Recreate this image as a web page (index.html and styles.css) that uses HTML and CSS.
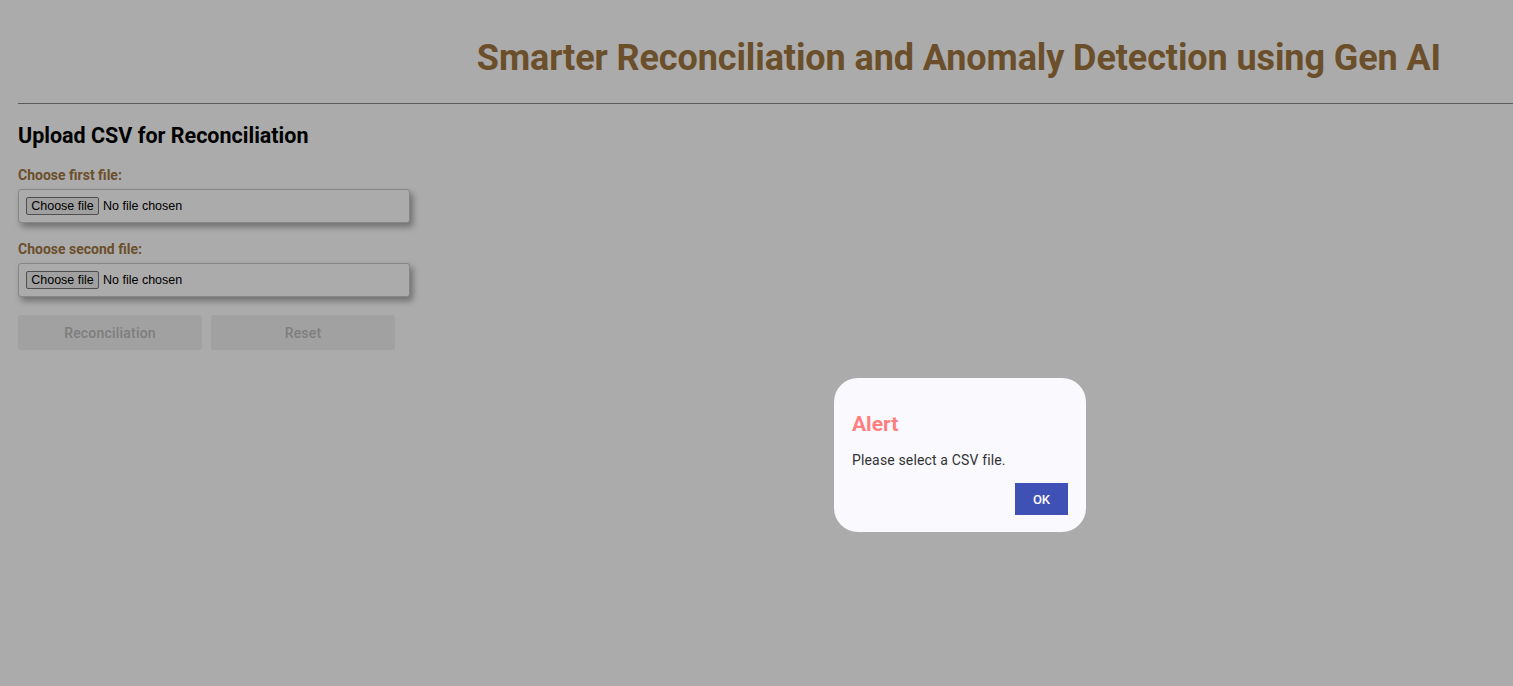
FILE: index.html
```html
<!DOCTYPE html>
<html lang="en">
<head>
<meta charset="utf-8">
<title>Smarter Reconciliation</title>
<link rel="stylesheet" href="styles.css">
</head>
<body>
<div class="page">
  <header class="header">
    <h1 class="title">Smarter Reconciliation and Anomaly Detection using Gen AI</h1>
  </header>
  <hr class="divider">
  <main class="upload">
    <h2 class="upload-title">Upload CSV for Reconciliation</h2>
    <div class="field">
      <span class="field-label">Choose first file:</span>
      <label class="file-box">
        <input type="file" class="file-input" accept=".csv">
        <span class="file-btn">Choose file</span>
        <span class="file-name">No file chosen</span>
      </label>
    </div>
    <div class="field">
      <span class="field-label">Choose second file:</span>
      <label class="file-box">
        <input type="file" class="file-input" accept=".csv">
        <span class="file-btn">Choose file</span>
        <span class="file-name">No file chosen</span>
      </label>
    </div>
    <div class="actions">
      <button class="btn" disabled>Reconciliation</button>
      <button class="btn" disabled>Reset</button>
    </div>
  </main>
</div>
<div class="backdrop"></div>
<div class="dialog" role="alertdialog">
  <h3 class="dialog-title">Alert</h3>
  <p class="dialog-text">Please select a CSV file.</p>
  <div class="dialog-actions"><button class="ok-btn">OK</button></div>
</div>
</body>
</html>
```
FILE: styles.css
```css
html, body {
  margin: 0;
  padding: 0;
  background: #ffffff;
  font-family: Roboto, "Liberation Sans", sans-serif;
  overflow: hidden;
}
.page {
  padding: 0 0 0 18px;
  height: 686px;
}
.header {
  display: flex;
  justify-content: flex-end;
  padding-right: 72px;
  height: 103px;
  align-items: center;
}
.title {
  margin: 12px 0 0 0;
  font-size: 36px;
  font-weight: 700;
  color: #a0773f;
  letter-spacing: -0.1px;
}
.divider {
  margin: 0;
  border: 0;
  border-top: 1px solid #888888;
}
.upload {
  width: 392px;
}
.upload-title {
  margin: 19px 0 19px 0;
  font-size: 21.5px;
  font-weight: 700;
  color: #000;
}
.field {
  display: flex;
  flex-direction: column;
  margin-bottom: 18px;
}
.field-label {
  font-size: 14px;
  font-weight: 700;
  color: #a0773f;
  margin-bottom: 6px;
}
.file-box {
  border: 1px solid #c8c8c8;
  border-radius: 3px;
  height: 32px;
  display: flex;
  align-items: center;
  gap: 4px;
  padding-left: 7px;
  box-shadow: 3px 4px 6px rgba(0,0,0,0.35);
  background: #fff;
  font-family: Arial, "Liberation Sans", sans-serif;
  font-size: 12.5px;
  color: #000;
  cursor: pointer;
}
.file-input {
  display: none;
}
.file-btn {
  box-sizing: border-box;
  height: 18px;
  width: 73px;
  display: flex;
  align-items: center;
  justify-content: center;
  border: 1px solid #767676;
  border-radius: 2px;
  background: #efefef;
}
.actions {
  display: flex;
  gap: 9px;
}
.btn {
  width: 184px;
  height: 35px;
  border: 0;
  border-radius: 3px;
  background: #f0f0f0;
  color: #bdbdbd;
  font-family: Roboto, "Liberation Sans", sans-serif;
  font-size: 14px;
  font-weight: 500;
  letter-spacing: 0.2px;
}
.backdrop {
  position: fixed;
  inset: 0;
  background: rgba(0,0,0,0.33);
}
.dialog {
  position: fixed;
  left: 834px;
  top: 378px;
  width: 252px;
  height: 154px;
  box-sizing: border-box;
  padding: 33px 18px 17px 18px;
  background: #f9f9fe;
  border-radius: 24px;
}
.dialog-title {
  margin: 0;
  font-size: 21px;
  font-weight: 700;
  color: #ff7f7f;
  line-height: 26px;
}
.dialog-text {
  margin: 13px 0 13px 0;
  font-size: 14px;
  color: #333333;
  line-height: 20px;
  letter-spacing: 0.15px;
}
.dialog-actions {
  display: flex;
  justify-content: flex-end;
}
.ok-btn {
  width: 53px;
  height: 32px;
  border: 0;
  border-radius: 0;
  background: #3f51b5;
  color: #ffffff;
  font-family: Roboto, "Liberation Sans", sans-serif;
  font-size: 13px;
  font-weight: 500;
}
```
